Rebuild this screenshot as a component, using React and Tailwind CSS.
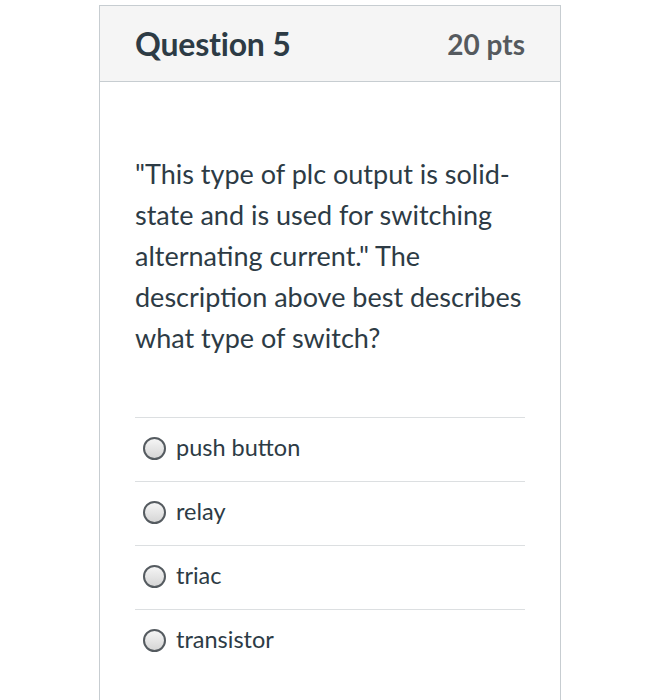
export default function App() {
  const answers = ['push button', 'relay', 'triac', 'transistor']

  return (
    <div className="min-h-screen bg-white pt-[5px]" style={{ fontFamily: 'Lato, "Liberation Sans", sans-serif' }}>
      <div className="ml-[99px] w-[462px] h-[695px] border border-b-0 border-[#c7cdd1] bg-white">
        {/* header */}
        <div className="h-[76px] bg-[#f5f5f5] border-b border-[#c7cdd1] flex items-center justify-between px-[35px]">
          <h2 className="text-[32px] font-bold text-[#2d3b45] tracking-[-0.2px]">Question 5</h2>
          <span className="text-[28px] font-bold text-[#555a5e]">20 pts</span>
        </div>

        {/* question */}
        <div className="px-[35px] pt-[71px]">
          <p className="text-[27px] leading-[41px] text-[#2d3b45]">
            "This type of plc output is solid-state and is used for switching alternating current." The description above best describes what type of switch?
          </p>

          <div className="mt-[59px]">
            {answers.map((a) => (
              <div key={a} className="h-[64px] border-t border-[#dcdfe1] flex items-center pl-[8px]">
                <span className="w-[23px] h-[23px] rounded-full border-2 border-[#555b60] bg-gradient-to-b from-[#f5f5f5] to-[#d6d6d6] mr-[10px] mt-[-2px]"></span>
                <span className="text-[23.5px] text-[#2d3b45] mt-[-4px]">{a}</span>
              </div>
            ))}
          </div>
        </div>
      </div>
    </div>
  )
}
